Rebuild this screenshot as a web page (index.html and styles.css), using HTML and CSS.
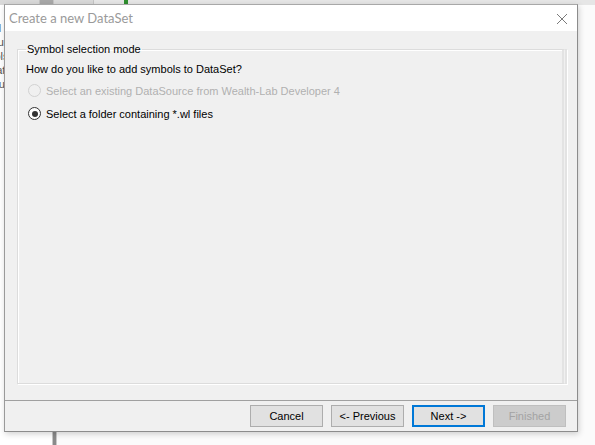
FILE: index.html
```html
<!DOCTYPE html>
<html>
<head>
<meta charset="utf-8">
<title>Create a new DataSet</title>
<link rel="stylesheet" href="styles.css">
</head>
<body>
<div class="desktop">
  <div class="app">
    <div class="app-toolbar">
      <span class="tb-seg"></span><span class="tb-seg dark"></span><span class="tb-seg"></span><span class="tb-green"></span>
    </div>
    <div class="app-body">
      <ul class="tree">
        <li>Yahoo Fund</li>
        <li>Dow 30 Indu</li>
        <li>Nasdaq Tools</li>
        <li>S&amp;P 100 Data</li>
        <li>Russell Tenu</li>
      </ul>
      <div class="splitter"></div>
      <div class="app-main"></div>
    </div>
  </div>

  <div class="dialog">
    <div class="titlebar">
      <span class="title">Create a new DataSet</span>
      <svg class="close" width="12" height="12" viewBox="0 0 12 12">
        <path d="M1 1 L11 11 M11 1 L1 11" stroke="#7a7a7a" stroke-width="1" fill="none"/>
      </svg>
    </div>
    <div class="content">
      <fieldset class="group">
        <legend>Symbol selection mode</legend>
        <p class="question">How do you like to add symbols to DataSet?</p>
        <label class="radio disabled">
          <span class="dot"></span>
          <span>Select an existing DataSource from Wealth-Lab Developer 4</span>
        </label>
        <label class="radio checked">
          <span class="dot"></span>
          <span>Select a folder containing *.wl files</span>
        </label>
      </fieldset>
    </div>
    <div class="footer">
      <button class="btn">Cancel</button>
      <button class="btn">&lt;- Previous</button>
      <button class="btn default">Next -&gt;</button>
      <button class="btn off">Finished</button>
    </div>
  </div>
</div>
</body>
</html>
```
FILE: styles.css
```css
* { box-sizing: border-box; }

html, body {
  margin: 0;
  padding: 0;
  width: 595px;
  height: 445px;
  overflow: hidden;
}

body {
  font-family: "Liberation Sans", Arial, sans-serif;
  font-size: 11px;
  color: #000;
  background: #f7f7f7;
}

.desktop {
  position: relative;
  width: 595px;
  height: 445px;
  overflow: hidden;
}

/* main application window behind the dialog */
.app {
  display: flex;
  flex-direction: column;
  height: 100%;
}

.app-toolbar {
  display: flex;
  height: 5px;
  background: #e6e6e6;
}
.tb-seg { width: 40px; background: #d9d9d9; border-right: 1px solid #c4c4c4; }
.tb-seg.dark { width: 14px; background: #a8a8a8; }
.tb-green { width: 4px; margin-left: 30px; background: #2f8f2f; }

.app-body {
  flex: 1;
  display: flex;
}

/* symbol tree; only its right-hand sliver shows beside the dialog */
.tree {
  list-style: none;
  margin: 0;
  padding: 16px 0 0 0;
  width: 53px;
  flex: none;
  background: #fff;
  border-right: 1px solid #c8c8c8;
  font-size: 11px;
  color: #555;
  white-space: nowrap;
  overflow: hidden;
}
.tree li { height: 14px; line-height: 14px; margin-left: -58px; }

.splitter {
  width: 4px;
  flex: none;
  background: #8a8a8a;
  border-right: 1px solid #c8c8c8;
}

.app-main {
  flex: 1;
  background: #fbfbfb;
}

/* the wizard dialog window */
.dialog {
  position: absolute;
  left: 4px;
  top: 4px;
  width: 574px;
  height: 428px;
  display: flex;
  flex-direction: column;
  background: #f0f0f0;
  border: 1px solid #8c8c8c;
  border-top-color: #a8a8a8;
  border-left-color: #9a9a9a;
  box-shadow: 1px 2px 6px rgba(0, 0, 0, 0.18);
}

.titlebar {
  height: 26px;
  flex: none;
  display: flex;
  align-items: center;
  justify-content: space-between;
  padding: 0 9px 0 4px;
  background: #fff;
}
.title {
  font-family: "Lato", "Liberation Sans", sans-serif;
  font-size: 13px;
  color: #9a9a9a;
}
.close { display: block; margin-top: 1px; }

.content {
  flex: 1;
  display: block;
  padding: 12px 10px 16px 12px;
  min-height: 0;
}

.group {
  display: block;
  width: 100%;
  height: 100%;
  margin: 0;
  padding: 4px 8px 0 8px;
  border: 1px solid #dcdcdc;
  border-right: 5px double #e3e3e3;
  box-shadow: inset 1px 1px 0 #fff, 1px 1px 0 #fff;
  min-width: 0;
}
.group legend {
  padding: 0 1px;
  font-size: 11px;
}

.question {
  margin: 3px 0 3px 0;
  line-height: 14px;
}

.radio {
  display: flex;
  align-items: center;
  gap: 5px;
  height: 23px;
  margin-left: 2px;
}
.radio .dot {
  width: 13px;
  height: 13px;
  border-radius: 50%;
  border: 1px solid #333;
  background: #fff;
  position: relative;
  flex: none;
}
.radio.checked .dot::after {
  content: "";
  position: absolute;
  left: 2.5px;
  top: 2.5px;
  width: 6px;
  height: 6px;
  border-radius: 50%;
  background: #333;
}
.radio.disabled { color: #b0b0b0; }
.radio.disabled .dot { border-color: #d2d2d2; background: #f0f0f0; }

.footer {
  height: 31px;
  flex: none;
  display: flex;
  align-items: center;
  justify-content: flex-end;
  gap: 8px;
  padding: 0 11px 1px 0;
  border-top: 1px solid #a0a0a0;
  background: #f0f0f0;
}

.btn {
  width: 73px;
  height: 22px;
  padding: 0;
  font-family: "Liberation Sans", Arial, sans-serif;
  font-size: 11px;
  color: #000;
  background: #e1e1e1;
  border: 1px solid #adadad;
}
.btn.default {
  border: 2px solid #0078d7;
}
.btn.off {
  background: #cccccc;
  border-color: #bfbfbf;
  color: #a3a3a3;
}
```
